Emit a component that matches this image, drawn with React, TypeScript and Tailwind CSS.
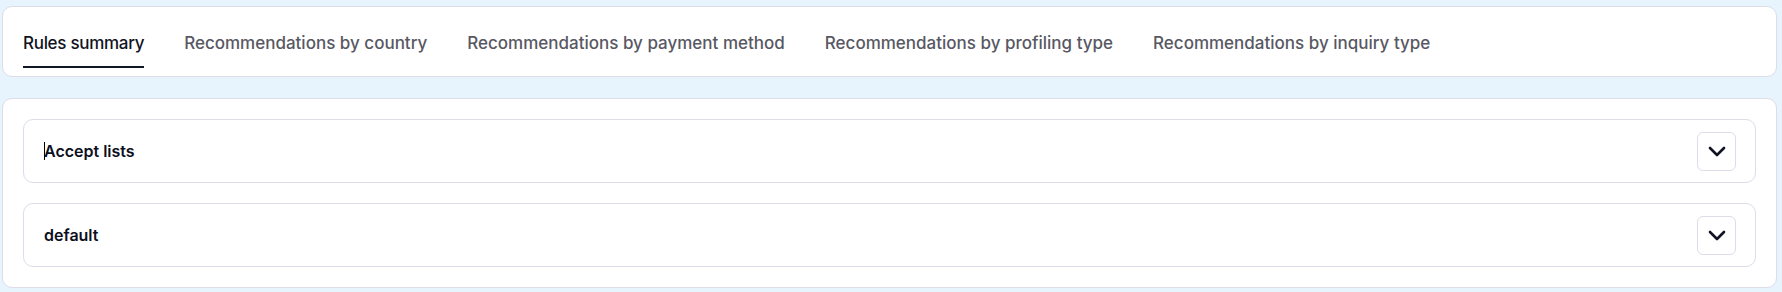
import React from "react";

const tabs = [
  "Rules summary",
  "Recommendations by country",
  "Recommendations by payment method",
  "Recommendations by profiling type",
  "Recommendations by inquiry type",
];

const sections = ["Accept lists", "default"];

function Chevron() {
  return (
    <svg width="18" height="11" viewBox="0 0 18 11" fill="none">
      <path d="M2 2l7 7 7-7" stroke="#111322" strokeWidth="2.6" strokeLinecap="round" strokeLinejoin="round" />
    </svg>
  );
}

export default function App() {
  return (
    <div className="min-h-[292px] bg-[#e8f4fd] pt-[6px] pl-[2px] pr-[5px] pb-[4px] font-['Inter',_sans-serif]">
      {/* Tabs */}
      <div className="bg-white border border-[#dcdde9] rounded-[10px] px-5 pt-6 pb-2">
        <div className="flex gap-10">
          {tabs.map((t, i) => (
            <button
              key={t}
              className={`pb-[11px] border-b-2 text-[17px] leading-6 font-medium ${
                i === 0 ? "border-[#121629] text-[#111322] tracking-[-0.3px]" : "border-transparent text-[#585863]"
              }`}
            >
              {t}
            </button>
          ))}
        </div>
      </div>

      {/* Accordions */}
      <div className="mt-[21px] bg-white border border-[#dcdde9] rounded-[10px] p-5 flex flex-col gap-5">
        {sections.map((s, i) => (
          <div
            key={s}
            className="h-16 border border-[#dcdde9] rounded-[10px] pl-5 pr-[19px] flex items-center justify-between"
          >
            <div className="flex items-center">
              {i === 0 && <span className="w-px h-[18px] bg-black -mr-px" />}
              <span className="text-[16px] font-semibold text-[#0d0f1c]">{s}</span>
            </div>
            <button className="w-[39px] h-[39px] border border-[#dcdde9] rounded-md flex items-center justify-center">
              <Chevron />
            </button>
          </div>
        ))}
      </div>
    </div>
  );
}
